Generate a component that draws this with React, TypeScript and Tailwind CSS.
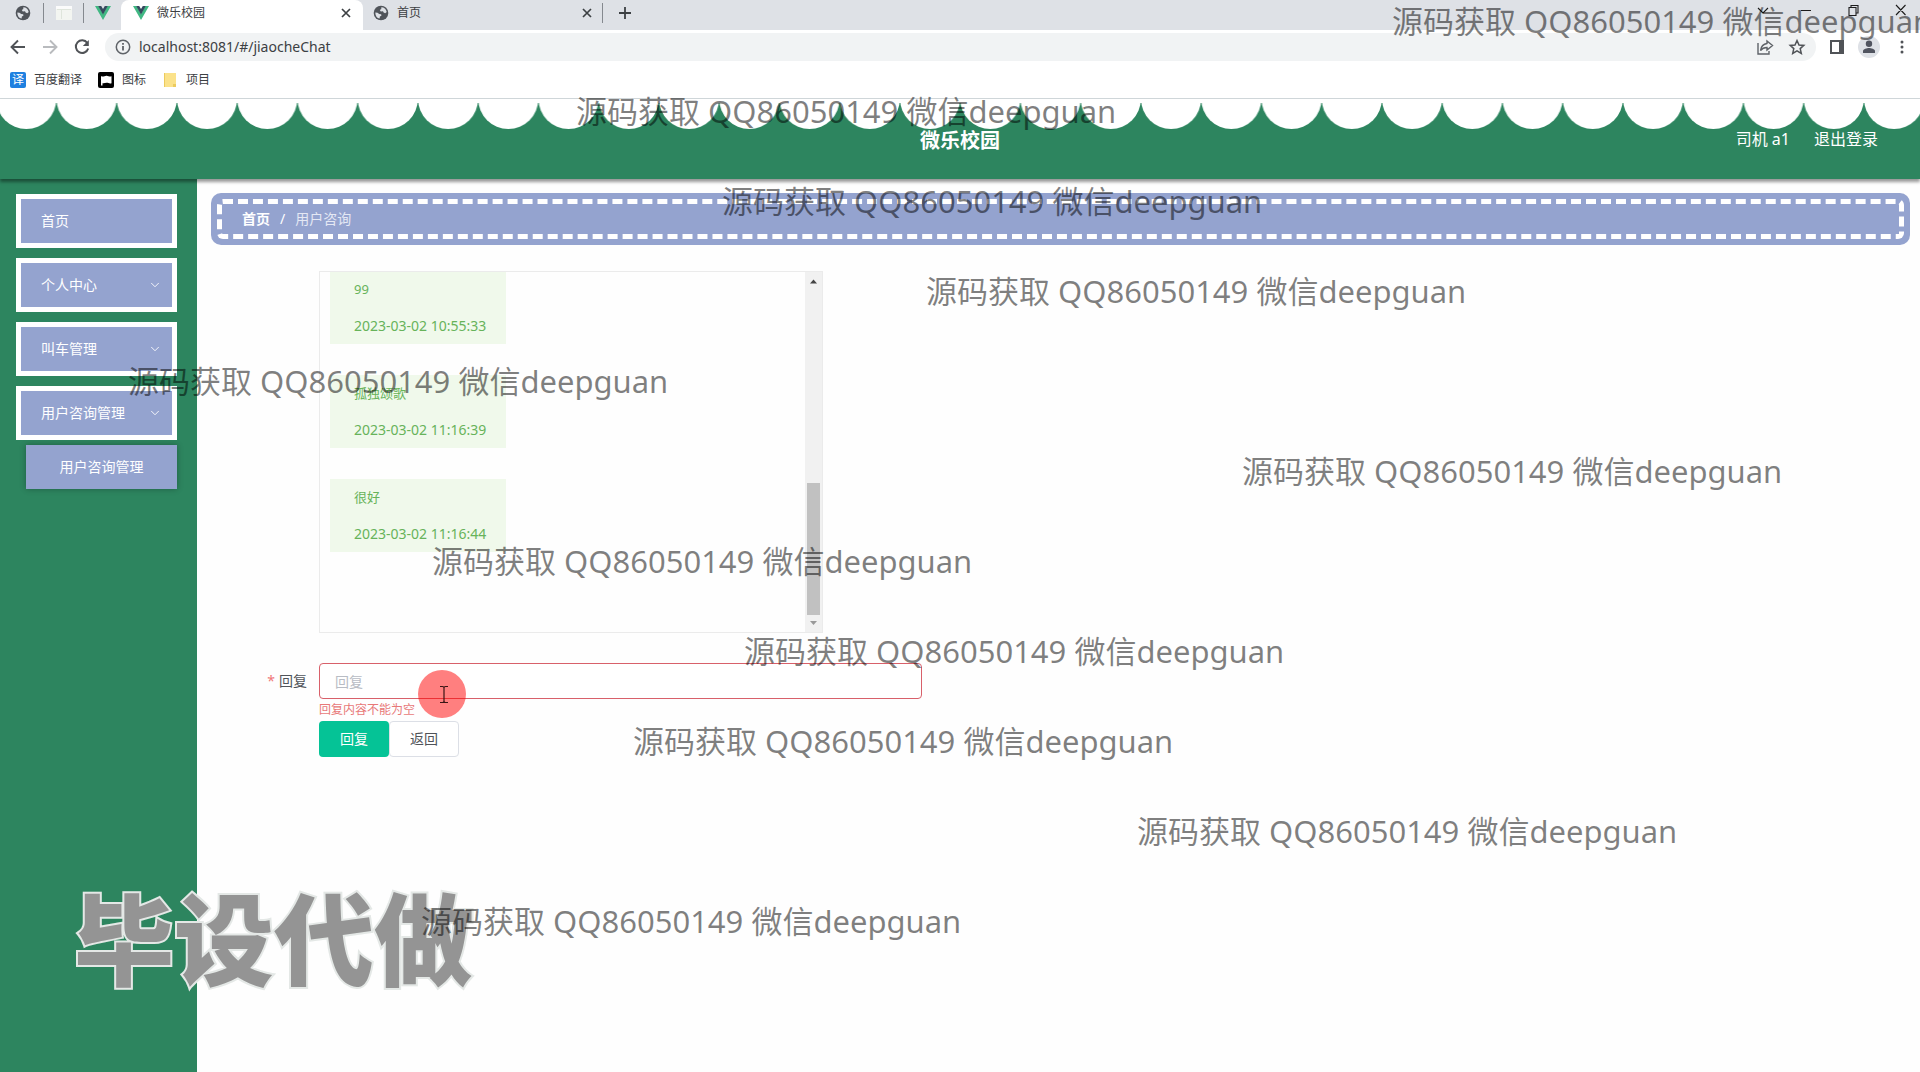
import { ChevronDown } from 'lucide-react';

const marks = [
  'left-[1392px] top-0',
  'left-[576px] top-[90px]',
  'left-[722px] top-[180px]',
  'left-[926px] top-[270px]',
  'left-[128px] top-[360px]',
  'left-[1242px] top-[450px]',
  'left-[432px] top-[540px]',
  'left-[744px] top-[630px]',
  'left-[633px] top-[720px]',
  'left-[1137px] top-[810px]',
  'left-[421px] top-[900px]',
];

const menu = [
  { label: '首页', open: false },
  { label: '个人中心', open: true },
  { label: '叫车管理', open: true },
  { label: '用户咨询管理', open: true },
];

const messages = [
  { text: '99', time: '2023-03-02 10:55:33' },
  { text: '孤独颂歌', time: '2023-03-02 11:16:39' },
  { text: '很好', time: '2023-03-02 11:16:44' },
];

function Globe() {
  return (
    <svg viewBox="0 0 16 16" className="size-4 shrink-0">
      <circle cx="8" cy="8" r="7.3" fill="#50545a" />
      <path d="M2.300 7.500 4.500 7.700l1.700 1.200 2 .4.2 1.400-1.500.9-.3 2C4 13 2.300 11 2.300 7.500z" fill="#dee1e6" />
      <path d="M8.300 2.300c2.700 0 4.900 2 5.400 4.700l-1.500 1.300-1.600-.8-.6-1.200-2.200.2-1-1.400 1.500-1z" fill="#dee1e6" />
    </svg>
  );
}

function VueMark() {
  return (
    <svg viewBox="0 0 16 14" className="h-3.5 w-4 shrink-0">
      <path d="M0 0h3.500L8 7.800 12.500 0H16L8 14z" fill="#41b883" />
      <path d="M3.200 0h3L8 3l1.800-3h3L8 8.400z" fill="#35495e" />
    </svg>
  );
}

function CloseX() {
  return (
    <svg viewBox="0 0 10 10" className="size-2.5" stroke="#3c4043" strokeWidth="1.700">
      <path d="M1 1l8 8M9 1 1 9" />
    </svg>
  );
}

function BrowserChrome() {
  return (
    <div className="border-b border-[#d0d7da] bg-white text-[#3c4043]">
      <div className="flex h-[30px] items-center bg-[#dee1e6] *:pb-1">
        <div className="flex h-full w-[121px] items-center">
          <div className="flex h-5 w-11 items-center justify-end border-r border-[#85898f] pr-3"><Globe /></div>
          <div className="flex h-5 w-10 items-center justify-center border-r border-[#85898f]">
            <svg viewBox="0 0 16 14" className="h-3.5 w-4"><rect width="16" height="14" fill="#f3f5f1" /><path d="M0 0h16v3H0z" fill="#fbfbfb" /><path d="M1 3.500h14M5.500 4v9" stroke="#dfe5dc" /></svg>
          </div>
          <div className="flex w-[37px] items-center justify-center"><VueMark /></div>
        </div>
        <div className="flex h-full w-[242px] items-center rounded-t-lg bg-white pr-3 pl-3">
          <VueMark />
          <span className="ml-2 flex-1 text-xs">微乐校园</span>
          <button aria-label="关闭微乐校园"><CloseX /></button>
        </div>
        <div className="flex h-full w-[240px] items-center pl-2.5">
          <Globe />
          <span className="ml-2 flex-1 text-xs">首页</span>
          <button aria-label="关闭首页" className="mr-2.5"><CloseX /></button>
          <span className="h-5 border-r border-[#85898f]" />
        </div>
        <button aria-label="新标签页" className="ml-4">
          <svg viewBox="0 0 12 12" className="size-3" stroke="#3c4043" strokeWidth="1.800"><path d="M6 0v12M0 6h12" /></svg>
        </button>
        <div className="ml-auto self-start pt-1 pr-[13px]">
          <svg viewBox="0 0 152 12" className="h-3 w-[152px]" fill="none" stroke="#1c1c1c" strokeWidth="1.100">
            <path d="M3 4l5 5 5-5M46 6.500h10M94 3.500h7v8h-7zM96 3.500V1.500h7v7.500h-2M141 1l9.500 10M150.500 1 141 11" />
          </svg>
        </div>
      </div>
      <div className="flex h-[34px] items-center">
        <div className="flex w-[105px] shrink-0 items-center gap-3.5 pl-[9px]">
          <button aria-label="后退"><svg viewBox="0 0 18 18" className="size-[18px]" fill="none" stroke="#505357" strokeWidth="1.900"><path d="M16 9H3M9 2.500 2.500 9 9 15.500" /></svg></button>
          <button aria-label="前进"><svg viewBox="0 0 18 18" className="size-[18px]" fill="none" stroke="#b9bbbe" strokeWidth="1.900"><path d="M2 9h13M9 2.500 15.500 9 9 15.500" /></svg></button>
          <button aria-label="刷新"><svg viewBox="0 0 18 18" className="size-[18px]" fill="none" stroke="#505357" strokeWidth="2"><path d="M14.300 5A6.300 6.300 0 1 0 15.200 10.500" /><path d="M15.800 2v6h-6z" fill="#505357" stroke="none" /></svg></button>
        </div>
        <div className="flex h-7 min-w-0 flex-1 items-center rounded-full bg-[#f1f3f4] pr-2.5 pl-2.5">
          <svg viewBox="0 0 16 16" className="size-4 shrink-0" fill="none" stroke="#5f6368" strokeWidth="1.500"><circle cx="8" cy="8" r="6.700" /><path d="M8 7v4.500M8 4v1.700" strokeWidth="1.800" /></svg>
          <input aria-label="地址" defaultValue="localhost:8081/#/jiaocheChat" className="ml-2 min-w-0 flex-1 bg-transparent text-sm outline-none" />
          <button aria-label="分享"><svg viewBox="0 0 18 18" className="size-[18px]" fill="none" stroke="#5f6368" strokeWidth="1.400"><path d="M2 5v11h11v-3" /><path d="M11 3l5.500 4.500L11 12V9.500C8 9.500 6 10.500 4.500 12.500 5 9 7 6 11 5.500z" /></svg></button>
          <button aria-label="收藏" className="ml-3.5"><svg viewBox="0 0 18 18" className="size-[18px]" fill="none" stroke="#505357" strokeWidth="1.500"><path d="M9 2.500l2 4.500 4.800.4-3.600 3.200 1.100 4.800L9 12.900l-4.300 2.500 1.100-4.800L2.200 7.400 7 7z" /></svg></button>
        </div>
        <div className="flex w-[104px] shrink-0 items-center pl-3">
          <button aria-label="侧边栏"><svg viewBox="0 0 14 14" className="ml-0.5 size-3.5"><path d="M0 0h14v14H0zM2 2v10h7V2z" fill="#505357" fillRule="evenodd" /></svg></button>
          <button aria-label="用户" className="ml-3.5 grid size-[22px] place-items-center rounded-full bg-[#dee1e6]"><svg viewBox="0 0 14 14" className="size-3.5" fill="#50545f"><circle cx="7" cy="3.700" r="3.200" /><path d="M1 13v-2c0-2 4-3 6-3s6 1 6 3v2z" /></svg></button>
          <button aria-label="菜单" className="ml-5"><svg viewBox="0 0 4 14" className="h-3.5 w-1" fill="#505357"><circle cx="2" cy="2" r="1.500" /><circle cx="2" cy="7" r="1.500" /><circle cx="2" cy="12" r="1.500" /></svg></button>
        </div>
      </div>
      <div className="flex h-[34px] items-start pt-2 pl-2.5 text-xs">
        <a href="#baidu" className="flex items-center gap-2"><span className="grid size-4 place-items-center rounded-xs bg-[#1e80e0] text-xs leading-4 text-white">译</span>百度翻译</a>
        <a href="#icons" className="ml-4 flex items-center gap-2"><svg viewBox="0 0 16 16" className="size-4"><rect width="16" height="16" rx="2" /><path d="M3 13.500V4c2.500 1.800 4-1 6.500 0 1.500.6 2.500.4 4 .2v7c-2 .8-3.500-.6-5-.4-1.500.2-2.500.8-4 .4v2.300z" fill="#fff" /></svg>图标</a>
        <a href="#projects" className="ml-4 flex items-center gap-2"><svg viewBox="0 0 16 16" className="size-4"><path d="M2 1h12v14H2z" fill="#fbe28a" /><path d="M2 1h1v14H2zM11 12h3v3h-3z" fill="#eccb5e" /></svg>项目</a>
      </div>
    </div>
  );
}

function Header() {
  return (
    <header className="relative z-10 h-20 bg-[#2d855f] shadow-[0_3px_3px_rgba(0,0,0,0.4)]">
      <svg className="block h-[30px] w-full" aria-hidden="true">
        <defs>
          <pattern id="scallop" x="-3.800" width="60.250" height="30" patternUnits="userSpaceOnUse">
            <circle cx="30.125" cy="0" r="30" fill="#fff" />
          </pattern>
        </defs>
        <rect width="100%" height="30" fill="url(#scallop)" />
        <rect width="100%" height="4" fill="#fff" />
      </svg>
      <div className="grid grid-cols-3 pr-[42px] text-white">
        <h1 className="col-start-2 ml-[42px] text-center text-xl leading-6 font-bold">微乐校园</h1>
        <div className="flex justify-end gap-6 text-base leading-5">
          <span>司机 a1</span>
          <a href="#logout">退出登录</a>
        </div>
      </div>
    </header>
  );
}

function Sidebar() {
  return (
    <nav className="w-[197px] shrink-0 bg-[#2d855f] py-[15px] pr-5 pl-4 text-sm text-white">
      <ul className="flex flex-col gap-2.5">
        {menu.map((m) => (
          <li key={m.label}>
            <button className="flex h-[54px] w-full items-center justify-between border-5 border-white bg-[#94a3cf] pr-2.5 pl-5">
              {m.label}
              {m.open && <ChevronDown className="size-3.5" strokeWidth={1.5} />}
            </button>
          </li>
        ))}
      </ul>
      <a href="#consult" className="mt-[5px] ml-2.5 flex h-11 items-center justify-center bg-[#94a3cf] shadow-[0_0_6px_rgba(0,0,0,0.3)]">用户咨询管理</a>
    </nav>
  );
}

function ChatLog() {
  return (
    <div className="flex h-[362px] w-[504px] border border-[#ebebeb]">
      <div className="flex flex-1 flex-col items-start justify-end gap-[31px] overflow-hidden pb-20 pl-2.5">
        {messages.map((m) => (
          <div key={m.time} className="flex h-[73px] w-44 shrink-0 flex-col justify-between bg-[#f0f9eb] px-6 py-2 text-[13px] leading-5 text-[#67b35a]">
            <p>{m.text}</p>
            <p className="text-sm leading-5 whitespace-nowrap">{m.time}</p>
          </div>
        ))}
      </div>
      <div className="flex w-[17px] flex-col items-center bg-[#f1f1f1]" aria-hidden="true">
        <svg viewBox="0 0 17 18" className="h-[18px] w-full"><path d="M5 11.500h7L8.500 7.500z" fill="#444" /></svg>
        <div className="min-h-0 flex-1" />
        <div className="h-[132px] w-[13px] bg-[#c1c1c1]" />
        <svg viewBox="0 0 17 17" className="h-[17px] w-full"><path d="M5 6h7l-3.500 4z" fill="#999" /></svg>
      </div>
    </div>
  );
}

export default function App() {
  return (
    <div className="relative flex min-h-screen flex-col overflow-hidden bg-[#fefefe] font-['Noto_Sans','Noto_Sans_CJK_SC',sans-serif]">
      <BrowserChrome />
      <Header />
      <div className="flex flex-1">
        <Sidebar />
        <main className="min-w-0 flex-1 pt-3.5 pr-2.5 pl-3.5">
          <div className="rounded-[10px] bg-[#94a3cf] p-1.5">
            <div className="flex h-10 items-center rounded-md border-5 border-dashed border-white px-5 text-sm text-white">
              <a href="#home" className="font-bold">首页</a>
              <span className="mx-2.5">/</span>
              <span className="text-[#e4e8f4]">用户咨询</span>
            </div>
          </div>
          <form className="mt-[26px] ml-[108px] max-w-[603px]">
            <ChatLog />
            <div className="relative mt-[30px]">
              <label htmlFor="reply" className="absolute top-0 right-full flex gap-1 pr-3 text-sm leading-9 whitespace-nowrap text-[#50545a]">
                <span className="text-[#f07878]">*</span>回复
              </label>
              <input id="reply" placeholder="回复" className="block h-9 w-full rounded-sm border border-[#d8606a] bg-white px-[15px] text-sm outline-none placeholder:text-[#b8bcc4]" />
              <div className="pointer-events-none absolute top-[7px] left-[99px] size-12 rounded-full bg-[#ff0000]/50">
                <svg viewBox="0 0 48 48" className="size-full" fill="none" stroke="#3a1515" strokeWidth="1.200"><path d="M22 16.500h2.500q1.500 0 1.500 1.500 0-1.500 1.500-1.500H30M26 18v13M22 32.500h2.500Q26 32.500 26 31q0 1.500 1.500 1.500H30" /></svg>
              </div>
            </div>
            <p className="h-[22px] pt-[3px] text-xs leading-4 text-[#e87878]">回复内容不能为空</p>
            <div className="flex text-sm">
              <button type="button" className="h-9 w-[70px] rounded-sm bg-[#05c396] text-white">回复</button>
              <button type="button" className="h-9 w-[70px] rounded-sm border border-[#dcdfe6] bg-white text-[#505358]">返回</button>
            </div>
          </form>
        </main>
      </div>
      <div className="pointer-events-none absolute inset-0 z-20 overflow-hidden">
        <p className="absolute top-[867px] left-[74px] text-[100px] leading-[144px] font-black whitespace-nowrap text-[#949494] [-webkit-text-stroke:4px_#e4e8e6] [paint-order:stroke_fill]">毕设代做</p>
        {marks.map((m) => (
          <p key={m} className={m + ' absolute text-[31px] leading-[42px] whitespace-nowrap text-black/50'}>源码获取 QQ86050149 微信deepguan</p>
        ))}
      </div>
    </div>
  );
}
